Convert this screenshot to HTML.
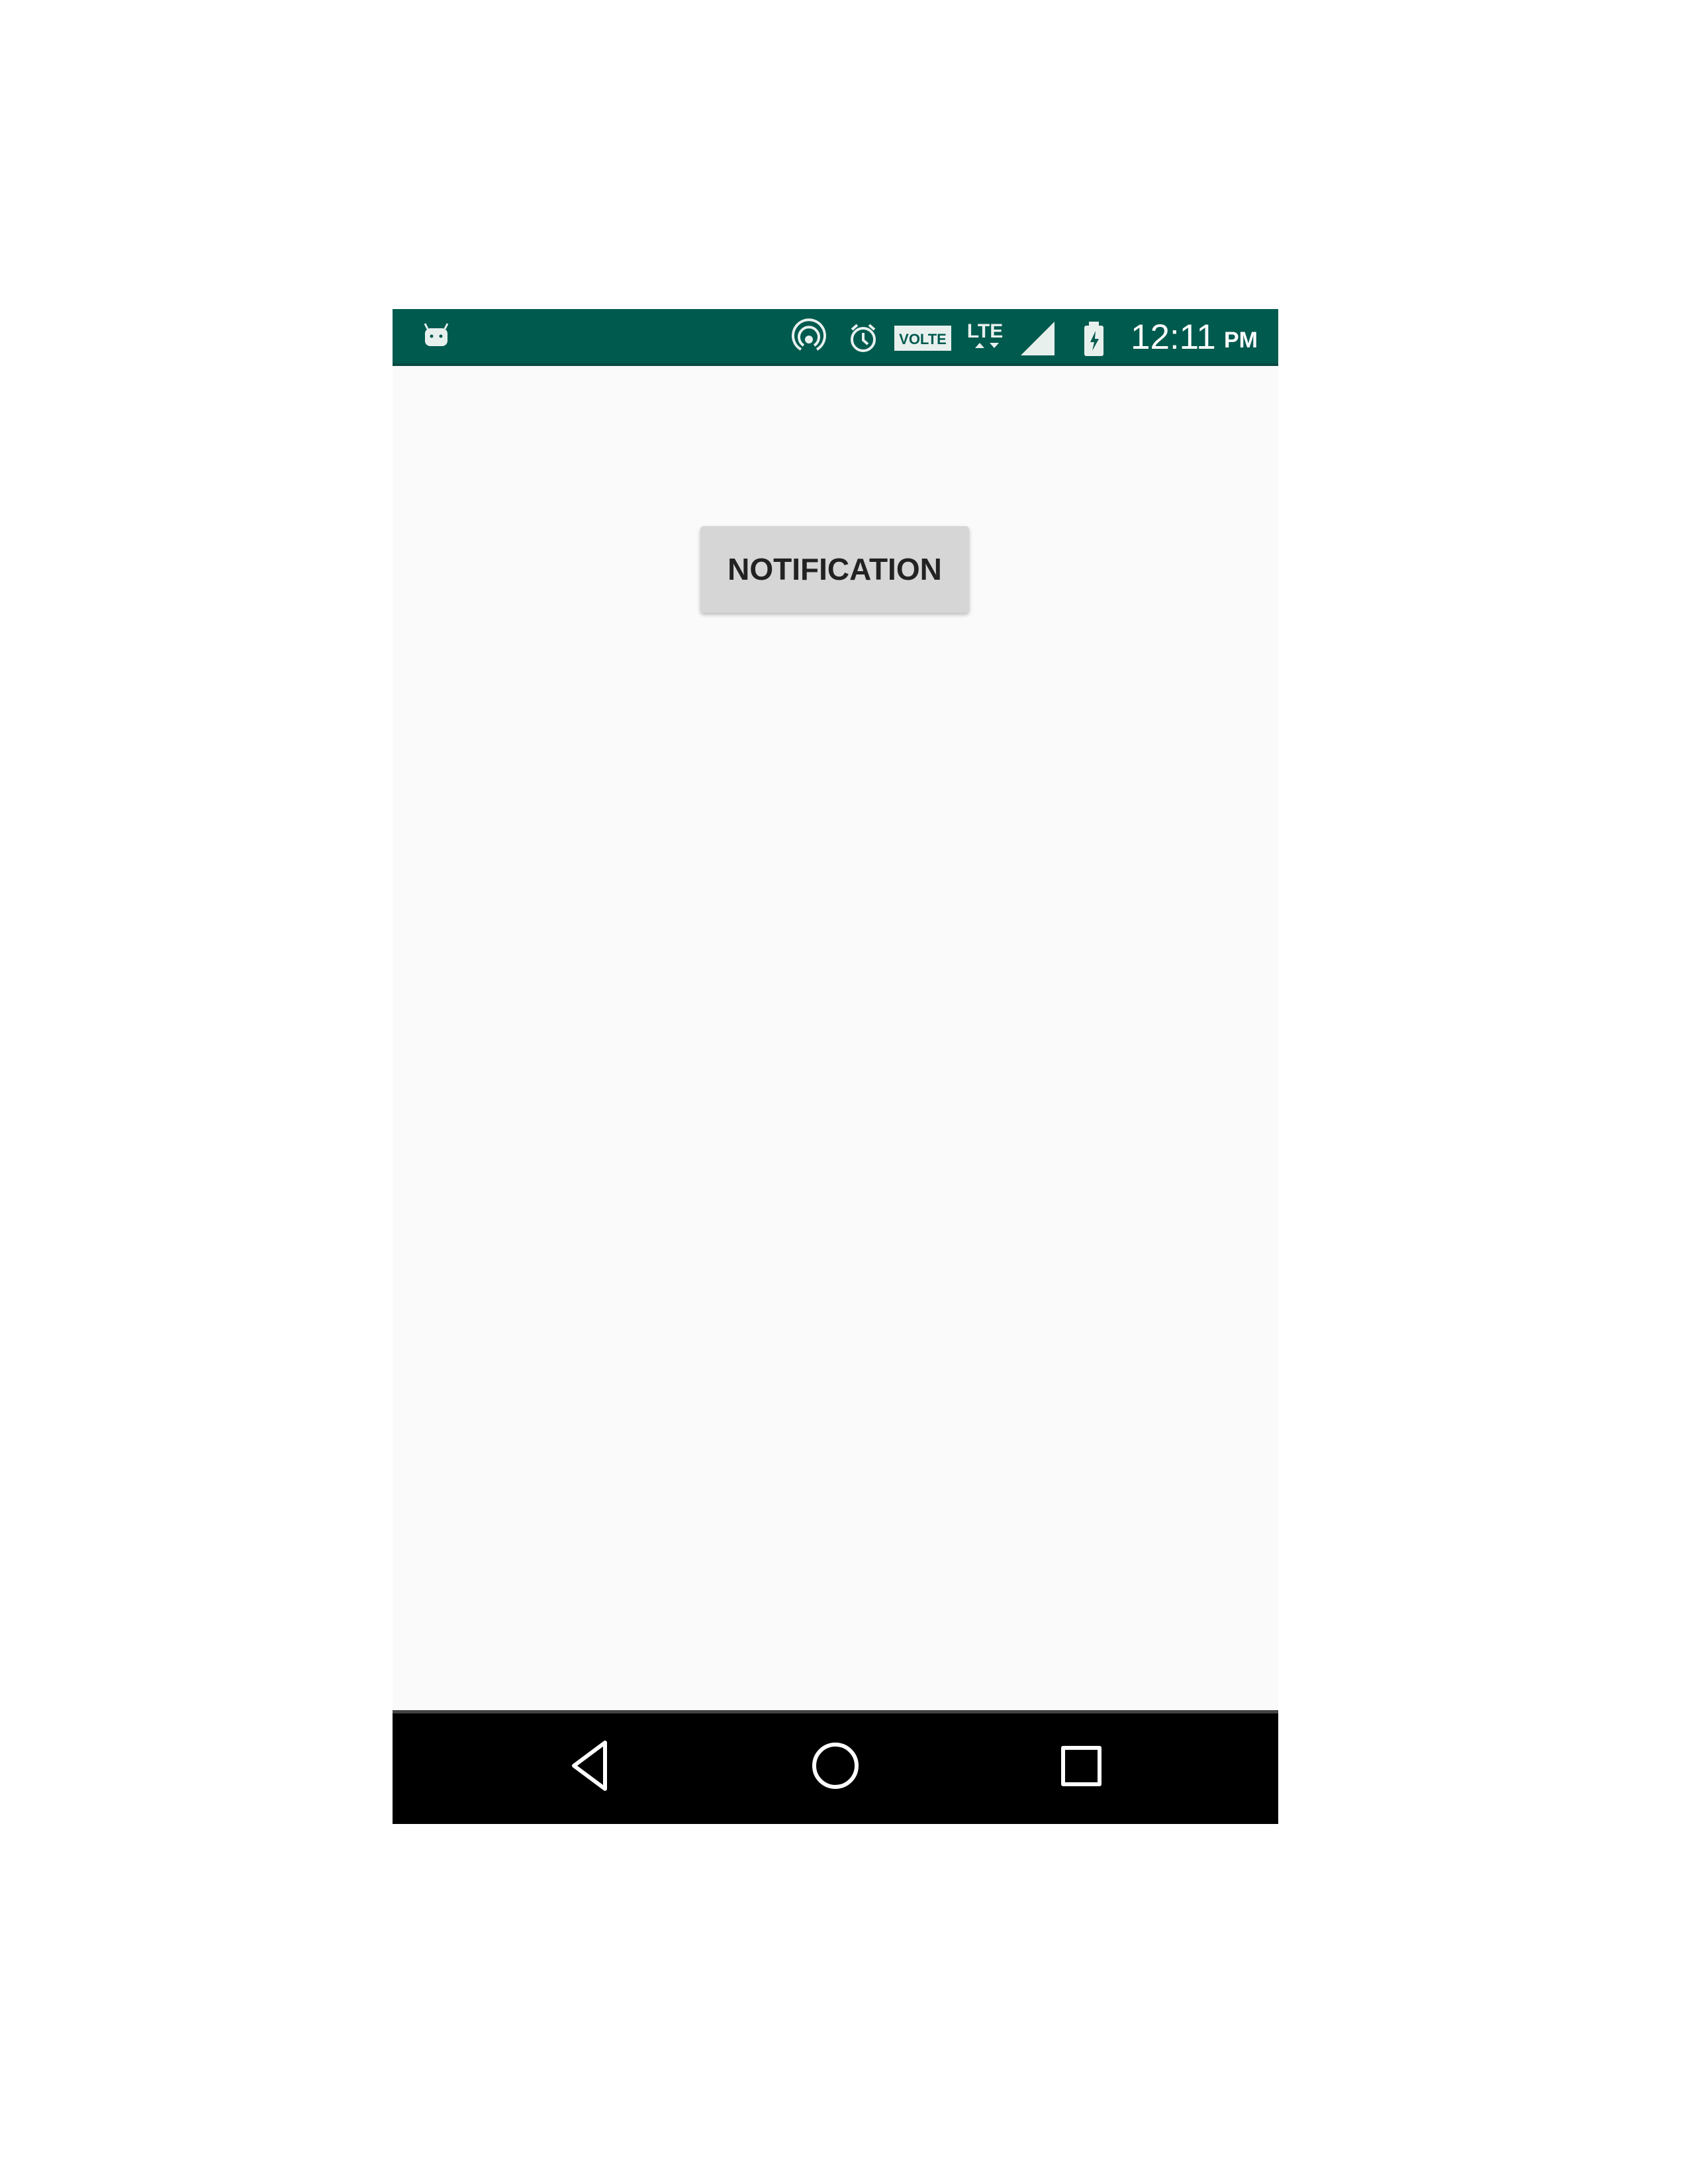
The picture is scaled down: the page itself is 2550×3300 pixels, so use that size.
<!DOCTYPE html>
<html><head><meta charset="utf-8">
<style>
html,body{margin:0;padding:0;background:#fff;}
body{width:2550px;height:3300px;position:relative;overflow:hidden;font-family:"Liberation Sans",sans-serif;}
#phone{position:absolute;left:593px;top:467px;width:1338px;height:2289px;background:#fafafa;}
#status{position:absolute;left:0;top:0;width:1338px;height:86px;background:#005a4e;border-bottom:4px solid #0b4a41;box-sizing:border-box;}
#nav{position:absolute;left:0;top:2117px;width:1338px;height:172px;background:#000;border-top:5px solid #444;box-sizing:border-box;}
#btn{position:absolute;left:465px;top:328px;width:406px;height:131px;background:#d6d6d6;border-radius:5px;box-shadow:0 3px 6px rgba(0,0,0,.25);color:#222;font-size:46px;font-weight:bold;line-height:131px;text-align:center;}
.t{position:absolute;color:#fff;}
</style></head><body>
<div id="phone">
 <div id="status">
  <svg width="1338" height="86" style="position:absolute;left:0;top:0">
   <rect x="49" y="29" width="34" height="27" rx="8" fill="#e8f0ee"/>
   <line x1="53" y1="30" x2="49" y2="22" stroke="#e8f0ee" stroke-width="3"/>
   <line x1="79" y1="30" x2="83" y2="22" stroke="#e8f0ee" stroke-width="3"/>
   <circle cx="59" cy="41" r="2.5" fill="#005a4e"/><circle cx="73" cy="41" r="2.5" fill="#005a4e"/>
   <g fill="none" stroke="#e8f0ee" stroke-width="4">
    <path d="M617 61 A24 24 0 1 1 641 61"/>
    <path d="M621 55 A15 15 0 1 1 637 55"/>
    <circle cx="629" cy="46" r="4" fill="#e8f0ee"/>
   </g>
   <g fill="none" stroke="#e8f0ee" stroke-width="4">
    <circle cx="711" cy="46" r="17"/>
    <path d="M711 36 V47 L718 53"/>
    <path d="M694 31 L702 24 M728 31 L720 24"/>
   </g>
   <rect x="758" y="25" width="86" height="38" fill="#e8f0ee"/>
   <text x="801" y="53" font-size="22" font-weight="bold" fill="#005a4e" text-anchor="middle" font-family="Liberation Sans">VOLTE</text>
   <text x="895" y="43" font-size="30" font-weight="bold" fill="#e8f0ee" text-anchor="middle" font-family="Liberation Sans">LTE</text>
   <path d="M880 59 l7 -8 l7 8 z M902 51 l7 8 l7 -8 z" fill="#e8f0ee"/>
   <path d="M949 70 L1000 19 L1000 70 Z" fill="#e8f0ee"/>
   <rect x="1045" y="25" width="29" height="46" rx="3" fill="#e8f0ee"/>
   <rect x="1052" y="19" width="15" height="7" fill="#e8f0ee"/>
   <path d="M1062 33 L1054 50 L1060 50 L1057 63 L1067 45 L1061 45 Z" fill="#005a4e"/>
  </svg>
  <div class="t" style="left:1115px;top:13px;font-size:53px;line-height:60px;">12:11</div>
  <div class="t" style="left:1256px;top:27px;font-size:34px;line-height:40px;font-weight:bold;">PM</div>
 </div>
 <div id="btn">NOTIFICATION</div>
 <div id="nav">
  <svg width="1338" height="167" style="position:absolute;left:0;top:0">
   <g fill="none" stroke="#fff" stroke-width="6" stroke-linejoin="round">
    <path d="M321 44 L321 114 L274 79 Z"/>
    <circle cx="669" cy="79" r="32"/>
    <rect x="1013" y="52" width="55" height="55"/>
   </g>
  </svg>
 </div>
</div>
</body></html>
